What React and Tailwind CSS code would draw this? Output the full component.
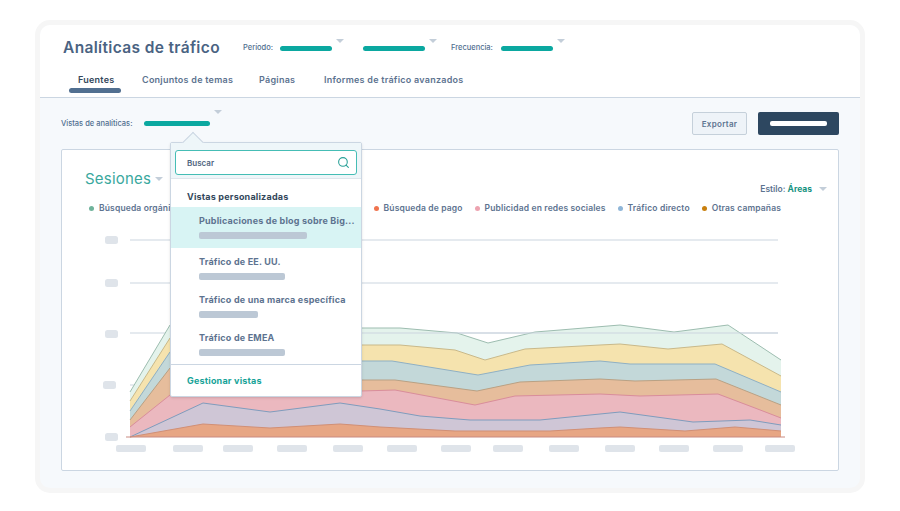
import { Search } from 'lucide-react';

// capas del gráfico, de arriba a abajo (coordenadas de la página)
const layers = [
    { fill: '#e4f3ec', stroke: '#9dbdb0', pts: '130,392 170,325 361,328 400,328 457,333 488,343 535,332 560,330 620,325 674,332 728,325 781,360' },
    { fill: '#f5e3ae', stroke: '#c9b98a', pts: '130,401 170,338 361,345 400,345 455,350 485,360 525,349 600,345 620,344 668,349 722,344 781,376' },
    { fill: '#c3d8d9', stroke: '#8fb0c4', pts: '130,411 170,352 361,361 392,361 478,375 530,365 600,361 630,364 715,364 781,392' },
    { fill: '#e6bd9c', stroke: '#b9a184', pts: '130,420 170,368 361,380 395,380 477,391 520,382 600,379 635,381 716,379 781,405' },
    { fill: '#ebb8bf', stroke: '#d98d9b', pts: '130,427 170,395 361,391 395,390 475,405 515,396 600,394 640,396 718,394 755,408 781,418' },
    { fill: '#cfc6d6', stroke: '#7f9cbd', pts: '130,437 203,403 270,412 340,403 380,409 420,416 470,420 540,420 600,414 620,412 693,422 750,420 781,425' },
    { fill: '#e7a684', stroke: '#d18f75', pts: '130,437 203,424 270,428 340,424 380,427 455,431 550,431 600,428 620,427 685,431 735,427 781,431' },
];

const gridLines = [240, 283, 333, 385];
const yLabels = [[105, 236], [105, 279], [105, 330], [103, 381], [105, 433]];
const xLabels = [116, 173, 223, 277, 333, 387, 441, 493, 549, 605, 659, 713, 765];

const legend = [
    { label: 'Búsqueda de pago', color: 'bg-[#f0744f]' },
    { label: 'Publicidad en redes sociales', color: 'bg-[#eda3b0]' },
    { label: 'Tráfico directo', color: 'bg-[#8fb6d8]' },
    { label: 'Otras campañas', color: 'bg-[#c9800f]' },
];

const views = [
    { name: 'Publicaciones de blog sobre Big...', bar: 'w-[108px]', active: true },
    { name: 'Tráfico de EE. UU.', bar: 'w-[86px]' },
    { name: 'Tráfico de una marca específica', bar: 'w-[59px]' },
    { name: 'Tráfico de EMEA', bar: 'w-[86px]' },
];

function Caret() {
    return <span className="w-0 h-0 border-x-[4.5px] border-x-transparent border-t-[4.5px] border-t-[#c3ced9]" />;
}

function TealBar({ width }) {
    return <span className={"h-[5px] rounded-full bg-[#0ba8a0] " + width} />;
}

function Chart() {
    return (
        <svg viewBox="62 225 776 235" className="block w-[776px] h-[235px] mt-[9px]">
            {gridLines.map((y) => (
                <line key={y} x1="130" x2="778" y1={y} y2={y} stroke="#ccd5df" strokeWidth="1.2" />
            ))}
            {yLabels.map(([x, y]) => (
                <rect key={y} x={x} y={y} width="13" height="8" rx="2.5" fill="#dfe4ea" />
            ))}
            {xLabels.map((x) => (
                <rect key={x} x={x} y="445" width="30" height="7" rx="2" fill="#dfe4ea" />
            ))}
            {layers.map((l) => (
                <g key={l.fill}>
                    <polygon points={l.pts + ' 781,437 130,437'} fill={l.fill} />
                    <polyline points={l.pts} fill="none" stroke={l.stroke} strokeWidth="1" />
                </g>
            ))}
            <line x1="333" x2="778" y1="333" y2="333" stroke="#ccd5df" strokeWidth="1" />
            <line x1="126" x2="785" y1="437" y2="437" stroke="#c98a80" strokeWidth="1" />
        </svg>
    );
}

function ViewsMenu() {
    return (
        <div className="absolute left-[130px] top-[44px] w-[192px] h-[255px] bg-white border border-[#cbd6e2] rounded-[2px] flex flex-col shadow-sm">
            <span className="absolute left-[14px] -top-[8px] w-4 h-4 rotate-45 bg-[#eef6f9] border-l border-t border-[#cbd6e2]" />
            <div className="relative h-[36px] bg-[#eef6f9] border-b border-[#dfe5ec] px-[4px] pt-[7px]">
                <div className="h-[25px] bg-white border-[1.5px] border-[#45bdb5] rounded-[3px] pl-[11px] pr-[6px] flex items-center justify-between">
                    <span className="text-[8px] font-semibold text-[#4f6580]">Buscar</span>
                    <Search className="w-[13px] h-[13px] text-[#2aa198]" strokeWidth={2} />
                </div>
            </div>
            <div className="text-[9px] font-bold text-[#33475b] pl-[16px] pt-[11px] h-[28px] tracking-[0.2px]">Vistas personalizadas</div>
            <ul>
                {views.map((v) => (
                    <li key={v.name} className={"h-[38px] pl-[28px] pt-[7px] first:h-[41px] " + (v.active ? 'bg-[#d8f4f4]' : '')}>
                        <div className="text-[9px] leading-[13px] font-bold text-[#5d7390] tracking-[0.2px] whitespace-nowrap">{v.name}</div>
                        <div className={"h-[7px] mt-[5px] rounded-[2px] bg-[#bcc8d5] " + v.bar} />
                    </li>
                ))}
            </ul>
            <div className="mt-auto h-[32px] border-t border-[#cbd6e2] pl-[16px] flex items-center text-[9px] font-bold text-[#17a398] tracking-[0.2px]">
                Gestionar vistas
            </div>
        </div>
    );
}

export default function App() {
    return (
        <div className="w-[900px] h-[511px] bg-white pt-[25px] pl-[40px] font-['Inter','Liberation_Sans',sans-serif]">
            <div className="w-[820px] h-[463px] rounded-[10px] bg-[#f6f9fc] overflow-hidden shadow-[0_0_0_5px_#f6f6f6]">
                <header className="h-[73px] bg-white border-b border-[#cbd6e2] px-[23px] pt-[12px] flex flex-col">
                    <div className="flex items-center h-[22px]">
                        <h1 className="text-[15.5px] font-semibold text-[#4a6382] tracking-[0.35px] w-[180px]">Analíticas de tráfico</h1>
                        <div className="flex items-center text-[7.5px] font-medium text-[#516f90]">
                            <span className="w-[37px]">Período:</span>
                            <TealBar width="w-[52px]" />
                            <span className="ml-[4px] mr-[19px]"><Caret /></span>
                            <TealBar width="w-[62px]" />
                            <span className="ml-[4px] mr-[14px]"><Caret /></span>
                            <span className="w-[50px]">Frecuencia:</span>
                            <TealBar width="w-[52px]" />
                            <span className="ml-[4px]"><Caret /></span>
                        </div>
                    </div>
                    <nav className="flex mt-[14px] text-[9px] font-semibold text-[#5d7390] tracking-[0.25px]">
                        <span className="relative ml-[15px] w-[64px] text-[#33475b]">
                            Fuentes
                            <span className="absolute -left-[9px] top-[15px] w-[52px] h-[5px] rounded-full bg-[#516f90]" />
                        </span>
                        <span className="w-[117px]">Conjuntos de temas</span>
                        <span className="w-[65px]">Páginas</span>
                        <span>Informes de tráfico avanzados</span>
                    </nav>
                </header>
                <main className="relative px-[21px] pt-[14px]">
                    <div className="flex items-center h-[23px] mb-[14px]">
                        <span className="text-[7.5px] font-medium text-[#516f90] w-[83px]">Vistas de analíticas:</span>
                        <TealBar width="w-[66px]" />
                        <span className="ml-[4px]"><Caret /></span>
                        <button className="ml-auto w-[55px] h-[23px] rounded-[2px] bg-[#eef3f8] border border-[#c5d0da] text-[8px] font-semibold text-[#5d7390] tracking-[0.3px]">Exportar</button>
                        <button className="ml-[11px] w-[81px] h-[23px] rounded-[2px] bg-[#2d4760] flex items-center justify-center">
                            <span className="w-[57px] h-[5px] rounded-[2px] bg-white" />
                        </button>
                    </div>
                    <section className="h-[322px] bg-white border border-[#cbd6e2] rounded-[2px]">
                        <div className="flex items-start justify-between h-[50px] pl-[23px] pr-[11px] pt-[19px]">
                            <div className="flex items-center gap-[4px] text-[15px] leading-[20px] text-[#3aa89e] tracking-[0.2px]">
                                Sesiones <Caret />
                            </div>
                            <div className="flex items-center gap-[7px] mt-[14px] text-[8.5px] font-semibold text-[#5d7390]">
                                <span>Estilo: <span className="font-bold text-[#17937f]">Áreas</span></span>
                                <Caret />
                            </div>
                        </div>
                        <div className="flex items-center h-[16px] pl-[27px] pr-[57px] text-[8.5px] font-semibold text-[#5d7390] tracking-[0.15px]">
                            <span className="w-[5px] h-[5px] rounded-full bg-[#6fb39b] mr-[5px]" />
                            <span>Búsqueda orgánica</span>
                            <div className="ml-auto flex items-center gap-[12px]">
                                {legend.map((item) => (
                                    <span key={item.label} className="flex items-center gap-[5px]">
                                        <span className={"w-[5px] h-[5px] rounded-full " + item.color} />
                                        {item.label}
                                    </span>
                                ))}
                            </div>
                        </div>
                        <Chart />
                    </section>
                    <ViewsMenu />
                </main>
            </div>
        </div>
    );
}
